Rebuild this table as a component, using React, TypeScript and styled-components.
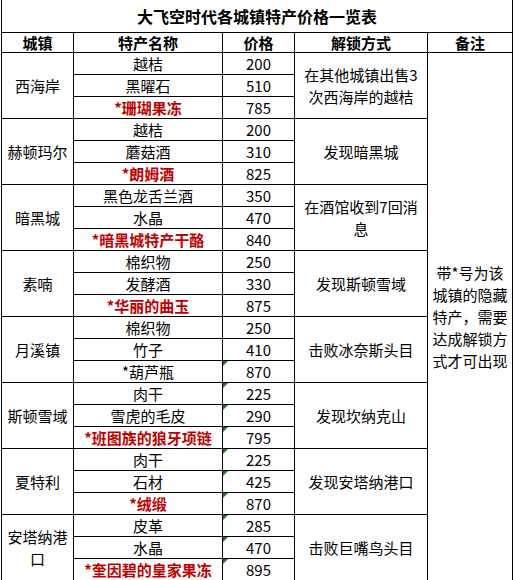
import { Fragment } from 'react';
import styled, { createGlobalStyle, css } from 'styled-components';

const GlobalStyle = createGlobalStyle`
  html, body {
    margin: 0;
    padding: 0;
    background: #ffffff;
    overflow: hidden;
  }
  body {
    font-family: "Noto Sans CJK SC", "Microsoft YaHei", sans-serif;
    color: #000000;
  }
`;

const Page = styled.div`
  padding-left: 1px;
  height: 580px;
  overflow: hidden;
`;

const Sheet = styled.table`
  border-collapse: separate;
  border-spacing: 0;
  table-layout: fixed;
  width: 511px;
  border-left: 1px solid #000;
  font-size: 15px;
`;

const Col = styled.col<{ $w: number }>`
  width: ${({ $w }) => $w}px;
`;

const Row = styled.tr<{ $h: number }>`
  height: ${({ $h }) => $h}px;
`;

const cellBase = css`
  box-sizing: border-box;
  padding: 0;
  border-right: 1px solid #000;
  border-bottom: 1px solid #000;
  text-align: center;
  vertical-align: middle;
  line-height: 22px;
  white-space: nowrap;
`;

const TitleCell = styled.td`
  ${cellBase};
  font-size: 16px;
  font-weight: 700;
`;

const HeadCell = styled.th`
  ${cellBase};
  font-weight: 700;
  line-height: 19px;
`;

const TownCell = styled.td`
  ${cellBase};
`;

const ItemCell = styled.td<{ $red?: boolean }>`
  ${cellBase};
  line-height: 21px;
  ${({ $red }) =>
    $red &&
    css`
      color: #c00000;
      font-weight: 700;
    `}
`;

const PriceCell = styled.td<{ $flagged?: boolean }>`
  ${cellBase};
  line-height: 21px;
  position: relative;
  ${({ $flagged }) =>
    $flagged &&
    css`
      &::before {
        content: '';
        position: absolute;
        left: 0;
        top: 0;
        width: 0;
        height: 0;
        border-top: 5px solid #1f7a1f;
        border-right: 5px solid transparent;
      }
    `}
`;

const UnlockCell = styled.td`
  ${cellBase};
`;

const NoteCell = styled.td`
  ${cellBase};
`;

type Item = { name: string; price: number; red?: boolean; flagged?: boolean };
type Town = { town: string[]; unlock: string[]; items: Item[] };

const towns: Town[] = [
  {
    town: ['西海岸'],
    unlock: ['在其他城镇出售3', '次西海岸的越桔'],
    items: [
      { name: '越桔', price: 200 },
      { name: '黑曜石', price: 510 },
      { name: '*珊瑚果冻', price: 785, red: true },
    ],
  },
  {
    town: ['赫顿玛尔'],
    unlock: ['发现暗黑城'],
    items: [
      { name: '越桔', price: 200 },
      { name: '蘑菇酒', price: 310 },
      { name: '*朗姆酒', price: 825, red: true },
    ],
  },
  {
    town: ['暗黑城'],
    unlock: ['在酒馆收到7回消', '息'],
    items: [
      { name: '黑色龙舌兰酒', price: 350 },
      { name: '水晶', price: 470 },
      { name: '*暗黑城特产干酪', price: 840, red: true },
    ],
  },
  {
    town: ['素喃'],
    unlock: ['发现斯顿雪域'],
    items: [
      { name: '棉织物', price: 250 },
      { name: '发酵酒', price: 330 },
      { name: '*华丽的曲玉', price: 875, red: true },
    ],
  },
  {
    town: ['月溪镇'],
    unlock: ['击败冰奈斯头目'],
    items: [
      { name: '棉织物', price: 250 },
      { name: '竹子', price: 410 },
      { name: '*葫芦瓶', price: 870, flagged: true },
    ],
  },
  {
    town: ['斯顿雪域'],
    unlock: ['发现坎纳克山'],
    items: [
      { name: '肉干', price: 225, flagged: true },
      { name: '雪虎的毛皮', price: 290, flagged: true },
      { name: '*班图族的狼牙项链', price: 795, red: true, flagged: true },
    ],
  },
  {
    town: ['夏特利'],
    unlock: ['发现安塔纳港口'],
    items: [
      { name: '肉干', price: 225, flagged: true },
      { name: '石材', price: 425, flagged: true },
      { name: '*绒缎', price: 870, red: true, flagged: true },
    ],
  },
  {
    town: ['安塔纳港', '口'],
    unlock: ['击败巨嘴鸟头目'],
    items: [
      { name: '皮革', price: 285, flagged: true },
      { name: '水晶', price: 470, flagged: true },
      { name: '*奎因碧的皇家果冻', price: 895, red: true, flagged: true },
    ],
  },
];

const note = ['带*号为该', '城镇的隐藏', '特产，需要', '达成解锁方', '式才可出现'];

function Lines({ lines }: { lines: string[] }) {
  return (
    <>
      {lines.map((l, i) => (
        <Fragment key={i}>
          {i > 0 && <br />}
          {l}
        </Fragment>
      ))}
    </>
  );
}

export default function App() {
  const bodyRows = towns.reduce((n, t) => n + t.items.length, 0);

  return (
    <Page>
      <GlobalStyle />
      <Sheet>
        <colgroup>
          <Col $w={72} />
          <Col $w={149} />
          <Col $w={72} />
          <Col $w={133} />
          <Col $w={85} />
        </colgroup>
        <tbody>
          <Row $h={33}>
            <TitleCell colSpan={5}>大飞空时代各城镇特产价格一览表</TitleCell>
          </Row>
          <Row $h={20}>
            <HeadCell>城镇</HeadCell>
            <HeadCell>特产名称</HeadCell>
            <HeadCell>价格</HeadCell>
            <HeadCell>解锁方式</HeadCell>
            <HeadCell>备注</HeadCell>
          </Row>
          {towns.map((t, ti) =>
            t.items.map((it, ii) => (
              <Row $h={22} key={`${ti}-${ii}`}>
                {ii === 0 && (
                  <TownCell rowSpan={t.items.length}>
                    <Lines lines={t.town} />
                  </TownCell>
                )}
                <ItemCell $red={it.red}>{it.name}</ItemCell>
                <PriceCell $flagged={it.flagged}>{it.price}</PriceCell>
                {ii === 0 && (
                  <UnlockCell rowSpan={t.items.length}>
                    <Lines lines={t.unlock} />
                  </UnlockCell>
                )}
                {ti === 0 && ii === 0 && (
                  <NoteCell rowSpan={bodyRows}>
                    <Lines lines={note} />
                  </NoteCell>
                )}
              </Row>
            ))
          )}
        </tbody>
      </Sheet>
    </Page>
  );
}
